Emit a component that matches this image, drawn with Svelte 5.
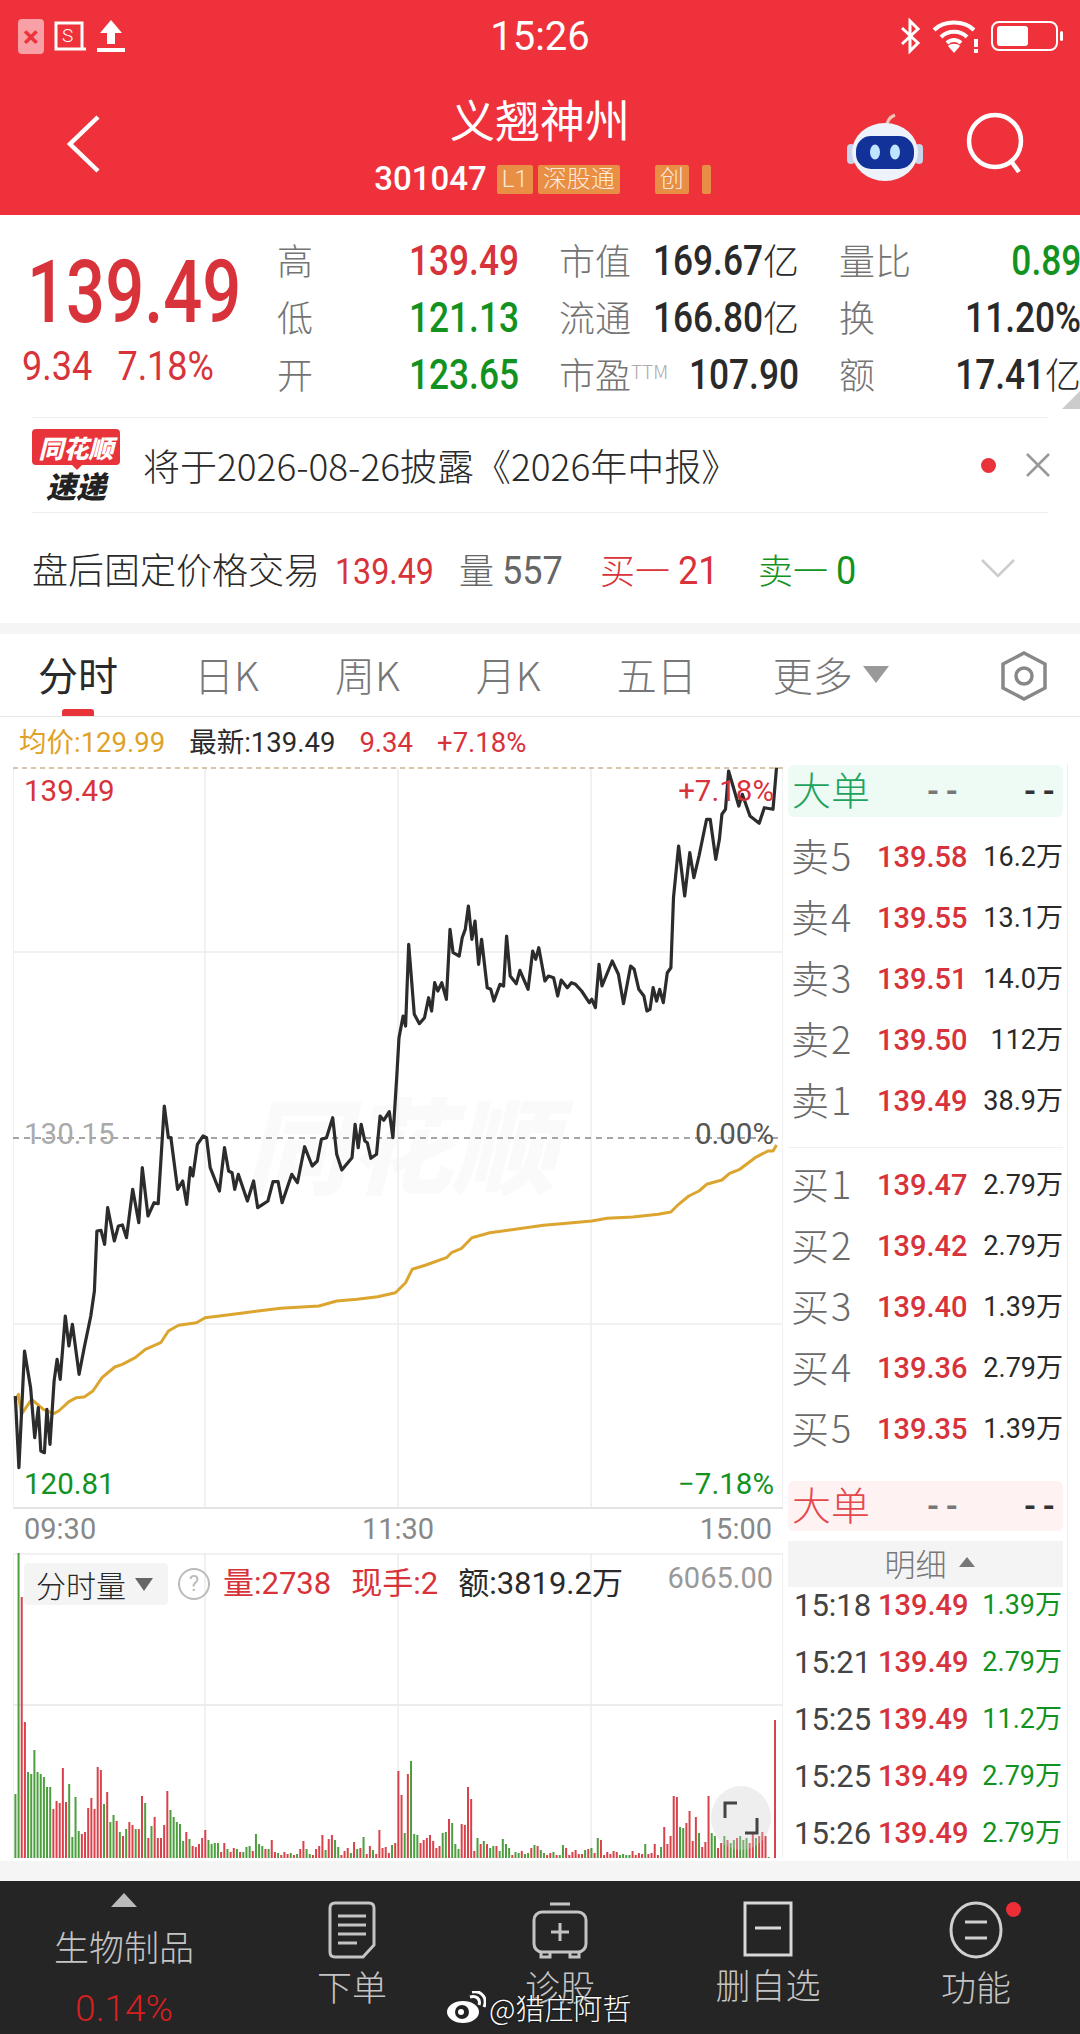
<script>
	// traced from the chart: x / 1.96, y / 3 + crop offset
	const lower = [[30,1065],[37,1280],[48,930],[60,1040],[68,1190],[75,1100],[80,1230],[87,1235],[92,1105],[98,1210],[106,1020],[112,955],[118,1015],[128,825],[135,915],[142,850],[155,1000],[165,920],[178,825],[185,750],[190,570],[198,568],[205,610],[211,500],[224,600],[232,555],[240,552],[248,590],[260,445],[272,545],[279,380],[290,525],[302,485],[310,488],[322,195],[330,290],[335,290],[348,445],[358,420],[366,490],[373,380],[378,405],[387,310],[398,285],[405,290],[412,380],[430,450],[440,320],[448,390],[455,395],[460,445],[467,400],[485,480],[497,420],[505,500],[515,490],[525,480],[535,422],[545,422],[553,485],[572,400],[583,425],[597,317],[612,375],[622,360],[630,295],[640,290],[652,230],[660,340],[670,387],[690,350],[696,250],[702,320],[708,250],[715,300],[720,305],[727,352],[738,340],[745,225],[752,238],[763,212],[770,290],[778,100]];
	const upper = [[782,1250],[790,1185],[795,1215],[801,970],[812,1180],[822,1208],[832,1190],[840,1130],[846,1170],[852,1085],[858,1110],[866,1085],[875,1135],[882,925],[888,995],[900,1005],[906,950],[912,925],[918,855],[925,955],[931,900],[938,1030],[944,955],[955,1100],[962,1105],[968,1140],[980,1090],[987,1095],[993,945],[1000,1065],[1012,1088],[1019,1048],[1035,1105],[1044,990],[1050,1015],[1056,980],[1068,1080],[1075,1065],[1085,1070],[1093,1125],[1100,1077],[1112,1100],[1120,1085],[1128,1090],[1140,1110],[1155,1145],[1160,1135],[1167,1160],[1174,1030],[1180,1095],[1200,1020],[1212,1060],[1222,1148],[1236,1035],[1243,1045],[1252,1105],[1262,1125],[1268,1170],[1274,1165],[1280,1100],[1287,1140],[1293,1105],[1300,1145],[1308,1055],[1315,1040],[1320,830],[1330,675],[1342,825],[1352,695],[1360,770],[1370,705],[1385,595],[1392,595],[1403,715],[1410,655],[1415,580],[1422,565],[1428,450],[1448,555],[1455,520],[1470,585],[1488,607],[1498,560],[1515,565],[1522,440]];
	const avg = [[30,1080],[36,1060],[42,1120],[62,1075],[85,1105],[105,1118],[115,1110],[135,1082],[150,1070],[165,1068],[182,1050],[200,1010],[225,978],[240,970],[265,950],[285,925],[315,905],[330,870],[350,853],[385,845],[402,830],[430,825],[480,815],[550,802],[625,795],[660,780],[700,775],[740,767],[775,755],[795,725],[808,685],[835,672],[875,650],[885,635],[905,622],[925,590],[960,575],[1010,565],[1065,553],[1100,548],[1160,540],[1190,532],[1240,528],[1290,520],[1315,513],[1330,490],[1350,465],[1370,450],[1385,430],[1415,417],[1430,397],[1450,385],[1480,350],[1505,330],[1515,330],[1522,312]];

	const pts = (list, top) => list.map(([x, y]) => `${(x / 1.96).toFixed(1)},${(top + y / 3).toFixed(1)}`).join(' ');
	const pricePoints = pts(lower, 1040) + ' ' + pts(upper, 620);
	const avgPoints = pts(avg, 1040);

	// positive = up (red), negative = down (green)
	const volumes = [-64,-307,261,136,-86,-84,-108,-86,-84,-81,-71,-71,49,57,55,90,56,-74,-21,-61,-27,24,26,50,60,49,91,88,-54,66,-36,-43,37,-26,22,-29,36,33,-29,29,62,-55,20,-32,41,20,20,33,67,-48,-41,-36,-34,-17,26,-19,12,11,14,20,28,-18,-14,-15,-15,6,15,-9,6,10,-9,6,-6,-11,-12,7,-24,-14,-12,9,-9,18,6,-5,3,6,4,-5,3,-4,9,17,-9,-4,3,9,12,23,-8,19,23,-18,-11,3,7,10,-5,16,-9,10,-21,4,12,-8,4,28,10,11,5,-13,15,87,63,-25,84,-97,-24,-23,15,18,20,23,17,10,12,-25,-26,39,-35,-14,-9,34,33,71,59,7,-20,14,-17,14,-10,-12,12,-7,-19,-14,-10,3,-6,-5,7,-4,-5,10,-13,12,-8,-5,3,5,-6,3,-3,-13,10,3,6,8,4,4,-8,9,-10,5,-20,18,3,6,4,7,6,-3,-4,-3,-3,7,3,5,4,-14,4,5,14,3,-11,31,14,22,62,61,-31,-30,35,47,17,41,-25,11,16,62,-25,-22,10,15,-22,18,-15,-18,20,-22,-18,-20,15,25,-20,22,26,22,-1,0,138];

	const gridX = [205, 398, 591];

	const asks = [
		['卖5', '139.58', '16.2'],
		['卖4', '139.55', '13.1'],
		['卖3', '139.51', '14.0'],
		['卖2', '139.50', '112'],
		['卖1', '139.49', '38.9']
	];
	const bids = [
		['买1', '139.47', '2.79'],
		['买2', '139.42', '2.79'],
		['买3', '139.40', '1.39'],
		['买4', '139.36', '2.79'],
		['买5', '139.35', '1.39']
	];
	const ticks = [
		['15:18', '1.39'],
		['15:21', '2.79'],
		['15:25', '11.2'],
		['15:25', '2.79'],
		['15:26', '2.79']
	];
</script>

<div class="page">
	<header class="top">
		<div class="status">
			<div class="status-left">
				<span class="close-app">×</span>
				<svg width="36" height="34" viewBox="0 0 36 34" fill="none" stroke="#fff" stroke-width="3"><path d="M30 30V4H4v26h30" /><text x="10" y="23" font-size="19" fill="#fff" stroke="none" font-family="Roboto">S</text></svg>
				<svg width="30" height="34" viewBox="0 0 30 34" fill="#fff"><path d="M15 1 26 14H19V25H11V14H4Z" /><rect x="1" y="29" width="28" height="4" /></svg>
			</div>
			<span class="clock">15:26</span>
			<div class="status-right">
				<svg width="24" height="36" viewBox="0 0 24 36" fill="none" stroke="#fff" stroke-width="3"><path d="M4 10 20 25 12 33V3L20 11 4 26" /></svg>
				<svg width="48" height="34" viewBox="0 0 48 34"><g fill="none" stroke="#fff" stroke-width="4"><path d="M2 11C12 1 32 1 42 11" /><path d="M9 18C16 11 28 11 35 18" /><path d="M15 24C19 20 25 20 29 24" /></g><path d="M16 27 22 34 28 27C25 24 19 24 16 27Z" fill="#fff" /><rect x="42" y="20" width="4" height="8" fill="#fff" /><rect x="42" y="30" width="4" height="4" fill="#fff" /></svg>
				<svg width="74" height="32" viewBox="0 0 74 32"><rect x="2" y="2" width="65" height="28" rx="7" fill="none" stroke="#fff" stroke-width="2" /><rect x="7" y="6" width="31" height="20" rx="3" fill="#fff" /><rect x="70" y="11" width="3" height="10" rx="1.5" fill="#fff" /></svg>
			</div>
		</div>
		<nav class="nav">
			<svg class="back" width="36" height="60" viewBox="0 0 36 60" fill="none" stroke="#fff" stroke-width="4.5"><path d="M32 3 4 30 32 57" /></svg>
			<div class="title-block">
				<div class="title">义翘神州</div>
				<div class="code-line">
					<span class="code">301047</span>
					<span class="tag">L1</span>
					<span class="tag">深股通</span>
					<span class="tag tag-gap">创</span>
					<span class="tag tag-cut"></span>
				</div>
			</div>
			<div class="nav-right">
				<svg class="robot" width="78" height="70" viewBox="0 0 78 70">
					<path d="M41 14C41 8 44 5 49 3" fill="none" stroke="#f3c4b8" stroke-width="3" />
					<rect x="1" y="32" width="8" height="20" rx="4" fill="#c9d3ea" />
					<rect x="69" y="32" width="8" height="20" rx="4" fill="#c9d3ea" />
					<ellipse cx="39" cy="40" rx="33" ry="29" fill="#eef2fa" />
					<rect x="10" y="24" width="58" height="33" rx="15" fill="#12329a" />
					<ellipse cx="29" cy="40" rx="5" ry="7.5" fill="#bfe4ff" />
					<ellipse cx="49" cy="40" rx="5" ry="7.5" fill="#bfe4ff" />
				</svg>
				<svg width="62" height="62" viewBox="0 0 62 62" fill="none" stroke="#fff" stroke-width="4.5"><circle cx="29" cy="29" r="26" /><path d="M45 49 53 60" /></svg>
			</div>
		</nav>
	</header>

	<section class="quote">
		<div class="quote-left">
			<div class="big-price">139.49</div>
			<div class="change"><span>9.34</span><span class="change-pct">7.18%</span></div>
		</div>
		<div class="stats">
			<div class="stat"><span class="lbl">高</span><span class="val red"><span class="sq">139.49</span></span></div>
			<div class="stat"><span class="lbl">市值</span><span class="val"><span class="sq">169.67</span><i>亿</i></span></div>
			<div class="stat"><span class="lbl">量比</span><span class="val green"><span class="sq">0.89</span></span></div>
			<div class="stat"><span class="lbl">低</span><span class="val green"><span class="sq">121.13</span></span></div>
			<div class="stat"><span class="lbl">流通</span><span class="val"><span class="sq">166.80</span><i>亿</i></span></div>
			<div class="stat"><span class="lbl">换</span><span class="val"><span class="sq">11.20%</span></span></div>
			<div class="stat"><span class="lbl">开</span><span class="val green"><span class="sq">123.65</span></span></div>
			<div class="stat"><span class="lbl">市盈<sup>TTM</sup></span><span class="val"><span class="sq">107.90</span></span></div>
			<div class="stat"><span class="lbl">额</span><span class="val"><span class="sq">17.41</span><i>亿</i></span></div>
		</div>
		<span class="corner"></span>
	</section>

	<section class="notice">
		<div class="notice-row">
			<div class="logo">
				<div class="logo-top">同花顺</div>
				<div class="logo-bottom">速递</div>
			</div>
			<span class="notice-text">将于2026-08-26披露《2026年中报》</span>
			<span class="dot"></span>
			<svg class="close" width="26" height="26" viewBox="0 0 26 26" fill="none" stroke="#999" stroke-width="2.5"><path d="M2 2 24 24M24 2 2 24" /></svg>
		</div>
		<div class="after-row">
			<span class="after-title">盘后固定价格交易</span>
			<span class="num red"><span class="sq-l">139.49</span></span>
			<span class="after-vol">量 <span class="sq-m">557</span></span>
			<span class="red after-buy">买一 <span class="sq-m">21</span></span>
			<span class="green after-sell">卖一 <span class="sq-m">0</span></span>
			<svg class="chev" width="36" height="20" viewBox="0 0 36 20" fill="none" stroke="#ccc" stroke-width="2.5"><path d="M2 2 18 18 34 2" /></svg>
		</div>
	</section>

	<div class="band"></div>

	<div class="tabs">
		<span class="tab active">分时</span>
		<span class="tab">日K</span>
		<span class="tab">周K</span>
		<span class="tab">月K</span>
		<span class="tab">五日</span>
		<span class="tab">更多<i class="tri"></i></span>
		<svg class="hex" width="48" height="52" viewBox="0 0 48 52" fill="none" stroke="#888" stroke-width="3.5"><path d="M24 3 45 14V38L24 49 3 38V14Z" /><circle cx="24" cy="26" r="8" /></svg>
	</div>

	<div class="info">
		<span class="gold">均价:129.99</span>
		<span>最新:139.49</span>
		<span class="red">9.34</span>
		<span class="red">+7.18%</span>
	</div>

	<div class="body">
		<div class="chart-col">
			<div class="chart">
				<svg width="770" height="745" viewBox="13 763 770 745">
					<text x="400" y="1185" class="mark">同花顺</text>
					{#each gridX as x}
						<line x1={x} x2={x} y1="767" y2="1508" stroke="#ececec" stroke-width="1.5" />
					{/each}
					<line x1="13" x2="13" y1="767" y2="1508" stroke="#ececec" stroke-width="1.5" />
					<line x1="783" x2="783" y1="767" y2="1508" stroke="#ececec" stroke-width="1.5" />
					<line x1="13" x2="783" y1="951" y2="951" stroke="#ececec" stroke-width="1.5" />
					<line x1="13" x2="783" y1="1323" y2="1323" stroke="#ececec" stroke-width="1.5" />
					<line x1="13" x2="783" y1="1507" y2="1507" stroke="#e4e4e4" stroke-width="2" />
					<line x1="13" x2="783" y1="767" y2="767" stroke="#c9b48c" stroke-width="1.5" stroke-dasharray="5 4" />
					<line x1="13" x2="783" y1="1137" y2="1137" stroke="#888" stroke-width="1.5" stroke-dasharray="6 5" />
					<polyline points={avgPoints} fill="none" stroke="#dba52f" stroke-width="3" stroke-linejoin="round" />
					<polyline points={pricePoints} fill="none" stroke="#2c2c2c" stroke-width="3.2" stroke-linejoin="round" />
				</svg>
				<span class="axis tl red">139.49</span>
				<span class="axis tr red">+7.18%</span>
				<span class="axis ml grey">130.15</span>
				<span class="axis mr dim">0.00%</span>
				<span class="axis bl green">120.81</span>
				<span class="axis br green">−7.18%</span>
			</div>
			<div class="times"><span>09:30</span><span>11:30</span><span>15:00</span></div>
			<div class="vol">
				<svg width="770" height="306" viewBox="13 1552 770 306">
					<line x1="13" x2="783" y1="1553" y2="1553" stroke="#ececec" stroke-width="1.5" />
					<line x1="13" x2="783" y1="1704" y2="1704" stroke="#e6e6e6" stroke-width="1.5" />
					{#each gridX as x}
						<line x1={x} x2={x} y1="1552" y2="1857" stroke="#ececec" stroke-width="1.5" />
					{/each}
					<line x1="13" x2="13" y1="1552" y2="1857" stroke="#ececec" stroke-width="1.5" />
					<line x1="783" x2="783" y1="1552" y2="1857" stroke="#ececec" stroke-width="1.5" />
					{#each volumes as v, i}
						<rect x={14.4 + i * 3.165} y={1857 - Math.abs(v)} width="2" height={Math.abs(v)} fill={v > 0 ? '#d9424a' : '#4c9f3e'} />
					{/each}
				</svg>
				<div class="vol-head">
					<span class="chip">分时量<i class="tri dark"></i></span>
					<span class="help">?</span>
					<span class="red">量:2738</span>
					<span class="red">现手:2</span>
					<span>额:3819.2万</span>
				</div>
				<span class="vol-max">6065.00</span>
				<div class="full">
					<svg width="40" height="40" viewBox="0 0 40 40" fill="none" stroke="#444" stroke-width="3"><path d="M16 5H4V20" /><path d="M36 20V35H24" /></svg>
				</div>
			</div>
		</div>

		<aside class="book">
			<div class="big green-band"><span>大单</span><b class="dash mid">--</b><b class="dash">--</b></div>
			<div class="levels">
				{#each asks as [label, price, size]}
					<div class="level"><span class="lv">{label}</span><span class="px">{price}</span><span class="sz">{size}万</span></div>
				{/each}
			</div>
			<div class="split"></div>
			<div class="levels">
				{#each bids as [label, price, size]}
					<div class="level"><span class="lv">{label}</span><span class="px">{price}</span><span class="sz">{size}万</span></div>
				{/each}
			</div>
			<div class="big red-band"><span>大单</span><b class="dash mid">--</b><b class="dash">--</b></div>
			<div class="detail">明细<i class="tri up"></i></div>
			<div class="ticks">
				{#each ticks as [time, size]}
					<div class="tick"><span class="tm">{time}</span><span class="px">139.49</span><span class="sz green">{size}万</span></div>
				{/each}
			</div>
		</aside>
	</div>

	<div class="spacer"></div>

	<footer class="bar">
		<div class="item sector">
			<i class="tri up light"></i>
			<span class="sector-name">生物制品</span>
			<span class="sector-pct">0.14%</span>
		</div>
		<div class="item">
			<svg width="50" height="58" viewBox="0 0 50 58" fill="none" stroke="#c4c4c4" stroke-width="3"><path d="M8 2H42Q47 2 47 7V44L36 56H8Q3 56 3 51V7Q3 2 8 2Z" /><path d="M11 15H39M11 24H39M11 33H39M11 42H30" /></svg>
			<span>下单</span>
		</div>
		<div class="item">
			<svg width="58" height="58" viewBox="0 0 58 58" fill="none" stroke="#c4c4c4" stroke-width="3"><path d="M19 3H39" /><rect x="3" y="11" width="52" height="40" rx="8" /><path d="M29 22V40M20 31H38" /><path d="M10 51V56H19V51M39 51V56H48V51" /></svg>
			<span>诊股</span>
		</div>
		<div class="item">
			<svg width="50" height="56" viewBox="0 0 50 56" fill="none" stroke="#d8d8d8" stroke-width="3"><rect x="2" y="2" width="46" height="52" /><path d="M12 27H38" /></svg>
			<span>删自选</span>
		</div>
		<div class="item">
			<svg width="54" height="58" viewBox="0 0 54 58" fill="none" stroke="#d0d0d0" stroke-width="3"><ellipse cx="27" cy="29" rx="25" ry="27" /><path d="M16 21H38M16 37H38" /></svg>
			<span>功能</span>
			<span class="badge"></span>
		</div>
		<div class="watermark">
			<svg width="40" height="32" viewBox="0 0 40 32"><ellipse cx="17" cy="21" rx="16" ry="11" fill="#fff" /><circle cx="16" cy="21" r="7" fill="#222" /><circle cx="15" cy="21" r="3" fill="#fff" /><path d="M24 6C30 4 35 8 33 14M26 1C35 -1 42 7 38 16" fill="none" stroke="#fff" stroke-width="3" /></svg>
			<span>@猎庄阿哲</span>
		</div>
	</footer>
</div>

<style>
	:global(body) {
		margin: 0;
		background: #fff;
	}

	.page {
		width: 1080px;
		height: 2034px;
		overflow: hidden;
		display: flex;
		flex-direction: column;
		font-family: "Noto Sans CJK SC", sans-serif;
		font-weight: 300;
		color: #2a2a2a;
	}

	i {
		font-style: normal;
	}

	.red {
		color: #d8323a;
	}

	.green {
		color: #129220;
	}

	.gold {
		color: #dfa126;
	}

	/* the app's number font is narrower than Roboto */
	.sq,
	.sq-l,
	.sq-m {
		display: inline-block;
		font-family: "Roboto", sans-serif;
		font-weight: 500;
		transform: scaleX(0.84);
		transform-origin: 100% 50%;
	}

	.sq-l,
	.sq-m {
		font-weight: 400;
		font-size: 37px;
		transform: scaleX(0.87);
		transform-origin: 0 50%;
	}

	.sq-m {
		font-size: 38px;
		transform: scaleX(0.95);
	}

	/* Header */
	.top {
		height: 215px;
		flex: none;
		background: #ee313a;
		color: #fff;
	}

	.status {
		height: 72px;
		display: flex;
		align-items: center;
		justify-content: space-between;
		position: relative;
		padding: 0 16px 0 18px;
	}

	.status-left,
	.status-right {
		display: flex;
		align-items: center;
		gap: 8px;
	}

	.status-right {
		gap: 10px;
	}

	.close-app {
		width: 26px;
		height: 35px;
		border-radius: 4px;
		background: #f9a0a6;
		color: #ee313a;
		font: 700 30px/35px "Roboto", sans-serif;
		text-align: center;
	}

	.clock {
		position: absolute;
		left: 0;
		right: 0;
		top: 1px;
		text-align: center;
		font: 400 40px/72px "Roboto", sans-serif;
	}

	.nav {
		height: 143px;
		display: grid;
		grid-template-columns: 1fr auto 1fr;
		align-items: start;
	}

	.back {
		margin: 42px 0 0 66px;
	}

	.title-block {
		display: flex;
		flex-direction: column;
		align-items: center;
		padding-top: 17px;
	}

	.title {
		font-size: 45px;
		line-height: 60px;
		font-weight: 400;
	}

	.code-line {
		display: flex;
		align-items: center;
		gap: 5px;
		margin-top: 14px;
		height: 32px;
		margin-left: 5px;
	}

	.code {
		font: 500 33px/32px "Roboto", sans-serif;
		margin-right: 5px;
	}

	.tag {
		height: 29px;
		line-height: 28px;
		padding: 0 5px;
		background: #e88e45;
		color: #fde9d8;
		font-size: 24px;
		font-family: "Roboto", "Noto Sans CJK SC", sans-serif;
		border-radius: 2px;
	}

	.tag-gap {
		margin-left: 30px;
	}

	.tag-cut {
		width: 1px;
		padding: 0 4px;
		margin-left: 8px;
	}

	.nav-right {
		display: flex;
		justify-content: flex-end;
		align-items: flex-start;
		gap: 42px;
		padding: 40px 52px 0 0;
	}

	/* Quote */
	.quote {
		position: relative;
		height: 202px;
		flex: none;
		display: flex;
		overflow: hidden;
	}

	.quote-left {
		width: 277px;
		flex: none;
		padding: 40px 0 0 27px;
		box-sizing: border-box;
		color: #d8323a;
	}

	.big-price {
		font: 500 87px/74px "Roboto", sans-serif;
		transform: scaleX(0.79);
		transform-origin: 0 50%;
		white-space: nowrap;
	}

	.change {
		display: flex;
		margin: 16px 0 0 -5px;
		font: 400 40px/44px "Roboto", sans-serif;
		transform: scaleX(0.9);
		transform-origin: 0 50%;
	}

	.change-pct {
		margin-left: 28px;
	}

	.stats {
		flex: 1;
		display: grid;
		grid-template-columns: 242px 240px 242px;
		grid-auto-rows: 57px;
		column-gap: 40px;
		padding-top: 15px;
	}

	.stat {
		display: flex;
		align-items: center;
		justify-content: space-between;
		white-space: nowrap;
	}

	.lbl {
		font-size: 36px;
		color: #747474;
	}

	sup {
		font-size: 19px;
		vertical-align: 10px;
		line-height: 0;
		color: #aaa;
	}

	.val {
		font-size: 42px;
		line-height: 50px;
	}

	.val i {
		font-size: 36px;
	}

	.corner {
		position: absolute;
		right: 0;
		bottom: 8px;
		border-left: 18px solid transparent;
		border-bottom: 18px solid #ccc;
	}

	/* Notices */
	.notice {
		flex: none;
		margin: 0 32px;
		border-top: 1px solid #eee;
	}

	.notice-row {
		height: 94px;
		display: flex;
		align-items: center;
		border-bottom: 1px solid #eee;
	}

	.logo {
		width: 88px;
		flex: none;
		text-align: center;
		font-style: italic;
		font-weight: 900;
	}

	.logo-top {
		background: #e8333a;
		color: #fff;
		border-radius: 4px;
		font-size: 25px;
		line-height: 36px;
		margin-bottom: 3px;
		position: relative;
	}

	.logo-top::after {
		content: "";
		position: absolute;
		left: 40px;
		top: 36px;
		border: 5px solid transparent;
		border-top-color: #e8333a;
	}

	.logo-bottom {
		font-size: 30px;
		line-height: 34px;
		color: #222;
	}

	.notice-text {
		flex: 1;
		margin-left: 23px;
		font-size: 37px;
		white-space: nowrap;
	}

	.dot {
		width: 15px;
		height: 15px;
		border-radius: 50%;
		background: #e8333a;
		margin-right: 29px;
	}

	.close {
		margin-right: -3px;
	}

	.after-row {
		height: 110px;
		display: flex;
		align-items: center;
		font-size: 35px;
		white-space: nowrap;
	}

	.after-title {
		width: 303px;
		flex: none;
		font-size: 36px;
	}

	.num {
		width: 124px;
	}

	.after-vol {
		width: 141px;
		color: #666;
	}

	.after-buy {
		width: 158px;
	}

	.after-sell {
		flex: 1;
	}

	.chev {
		margin-right: 32px;
	}

	.band {
		height: 11px;
		flex: none;
		background: #f5f5f5;
	}

	/* Tabs */
	.tabs {
		height: 83px;
		flex: none;
		display: flex;
		align-items: center;
		gap: 76px;
		padding-left: 38px;
		border-bottom: 1px solid #e8e8e8;
		box-sizing: border-box;
		position: relative;
		font-size: 40px;
		color: #777;
	}

	.tab {
		white-space: nowrap;
		display: flex;
		align-items: center;
		padding-bottom: 2px;
	}

	.active {
		color: #2a2a2a;
		font-weight: 400;
	}

	.active::after {
		content: "";
		position: absolute;
		left: 62px;
		bottom: 0;
		width: 32px;
		height: 7px;
		border-radius: 3px 3px 0 0;
		background: #e8333a;
	}

	.tri {
		width: 0;
		height: 0;
		margin-left: 10px;
		border: 13px solid transparent;
		border-bottom-width: 0;
		border-top: 17px solid #999;
	}

	.hex {
		position: absolute;
		left: 1000px;
		top: 16px;
	}

	.info {
		height: 47px;
		flex: none;
		box-sizing: border-box;
		padding: 5px 0 0 19px;
		display: flex;
		align-items: center;
		gap: 24px;
		font: 400 27.5px/42px "Roboto", "Noto Sans CJK SC", sans-serif;
		color: #2a2a2a;
		white-space: nowrap;
	}

	/* Charts */
	.body {
		display: flex;
		height: 1097px;
		flex: none;
		padding-left: 13px;
	}

	.chart-col {
		width: 770px;
		flex: none;
	}

	.chart {
		position: relative;
		height: 745px;
	}

	.chart svg,
	.vol svg {
		display: block;
	}

	.mark {
		font: italic 900 104px "Noto Sans CJK SC", sans-serif;
		fill: #fafafa;
		text-anchor: middle;
	}

	.axis {
		position: absolute;
		font: 400 29.5px/34px "Roboto", sans-serif;
	}

	.tl,
	.tr {
		top: 10px;
	}

	.ml,
	.mr {
		top: 353px;
	}

	.bl,
	.br {
		top: 703px;
	}

	.tl,
	.ml,
	.bl {
		left: 11px;
	}

	.tr,
	.mr,
	.br {
		right: 9px;
	}

	.grey {
		color: #aaa;
	}

	.dim {
		color: #555;
	}

	.times {
		height: 44px;
		display: flex;
		justify-content: space-between;
		padding: 0 11px;
		font: 400 29px/40px "Roboto", sans-serif;
		color: #888;
	}

	.vol {
		position: relative;
		height: 306px;
	}

	.vol-head {
		position: absolute;
		left: 11px;
		top: 10px;
		display: flex;
		align-items: center;
		gap: 20px;
		font: 400 31px/42px "Roboto", "Noto Sans CJK SC", sans-serif;
		white-space: nowrap;
	}

	.chip {
		width: 144px;
		height: 42px;
		display: flex;
		align-items: center;
		box-sizing: border-box;
		padding-left: 12px;
		background: #f4f4f4;
		border-radius: 4px;
		font-family: "Noto Sans CJK SC", sans-serif;
		font-weight: 300;
		font-size: 30px;
	}

	.tri.dark {
		margin-left: 9px;
		border-width: 13px 9px 0;
		border-top-color: #666;
		border-left-color: transparent;
		border-right-color: transparent;
	}

	.help {
		width: 28px;
		height: 28px;
		margin: 0 -7px 0 -10px;
		border: 2px solid #bbb;
		border-radius: 50%;
		color: #bbb;
		font-size: 22px;
		line-height: 28px;
		text-align: center;
	}

	.vol-max {
		position: absolute;
		right: 10px;
		top: 7px;
		font: 400 29px/36px "Roboto", sans-serif;
		color: #999;
	}

	.full {
		position: absolute;
		left: 698px;
		top: 233px;
		width: 60px;
		height: 64px;
		display: flex;
		align-items: center;
		justify-content: center;
		border-radius: 50%;
		background: rgba(205, 205, 205, 0.35);
	}

	/* Order book */
	.book {
		width: 285px;
		flex: none;
		box-sizing: border-box;
		height: 1095px;
		padding: 1px 4px 0 5px;
		border-right: 1px solid #eee;
	}

	.big {
		height: 52px;
		display: flex;
		align-items: center;
		padding: 0 2px 0 4px;
		border-radius: 6px;
		font-size: 39px;
	}

	.green-band {
		background: #eefaf4;
		color: #1ea35f;
	}

	.red-band {
		height: 50px;
		margin-top: 21px;
		background: #fef2f2;
		color: #e5484d;
	}

	.big span {
		flex: 1;
		padding-bottom: 6px;
	}

	.dash {
		width: 42px;
		color: #333;
		font: 700 32px/1 "Roboto", sans-serif;
		letter-spacing: 6px;
		text-align: right;
	}

	.dash.mid {
		margin-right: 55px;
		color: #777;
	}

	.levels {
		margin-top: 10px;
	}

	.level {
		height: 61px;
		display: grid;
		grid-template-columns: 86px 1fr auto;
		align-items: center;
		padding: 0 0 0 3px;
	}

	.lv {
		font-size: 38px;
		letter-spacing: 2px;
		line-height: 50px;
		padding-bottom: 6px;
		color: #6a6a6a;
	}

	.px {
		font: 500 29px/1 "Roboto", sans-serif;
		color: #d8323a;
	}

	.sz {
		font: 400 27px/1 "Roboto", "Noto Sans CJK SC", sans-serif;
	}

	.split {
		margin-top: 15px;
		border-top: 1px solid #f0f0f0;
		margin-bottom: -3px;
	}

	.detail {
		height: 46px;
		margin-top: 10px;
		display: flex;
		align-items: center;
		justify-content: center;
		background: #f4f4f4;
		color: #777;
		font-size: 31px;
		padding: 0 0 4px 8px;
		box-sizing: border-box;
	}

	.tri.up {
		margin-left: 12px;
		border-width: 0 8px 10px;
		border-top: 0;
		border-bottom: 10px solid #777;
		border-left-color: transparent;
		border-right-color: transparent;
	}

	.ticks {
		display: flex;
		flex-direction: column;
		gap: 17px;
		margin-top: -2px;
	}

	.tick {
		height: 40px;
		display: grid;
		grid-template-columns: 84px 1fr auto;
		align-items: center;
		padding: 0 1px 0 6px;
	}

	.tm {
		font: 400 31px/1 "Roboto", sans-serif;
		color: #444;
	}

	.spacer {
		flex: 1;
		background: #f5f5f5;
	}

	/* Bottom bar */
	.bar {
		height: 153px;
		flex: none;
		position: relative;
		display: grid;
		grid-template-columns: 248px repeat(4, 208px);
		background: #252525;
		color: #c4c4c4;
	}

	.item {
		position: relative;
		display: flex;
		flex-direction: column;
		align-items: center;
		padding-top: 20px;
		font-size: 35px;
		line-height: 50px;
	}

	.item span {
		margin-top: 2px;
	}

	.sector {
		padding-top: 12px;
	}

	.tri.light {
		margin-left: 0;
		border-width: 0 13px 14px;
		border-bottom-color: #bbb;
	}

	.item .sector-name {
		margin-top: 14px;
		line-height: 50px;
	}

	.item .sector-pct {
		margin-top: 13px;
		font: 300 37px/50px "Roboto", sans-serif;
		color: #d81f1f;
	}

	.item .badge {
		position: absolute;
		margin: 0;
		left: 134px;
		top: 21px;
		width: 15px;
		height: 15px;
		border-radius: 50%;
		background: #ee2e36;
	}

	.watermark {
		position: absolute;
		left: 446px;
		top: 101px;
		display: flex;
		align-items: center;
		gap: 3px;
		color: #fff;
		font-size: 29px;
		line-height: 50px;
		text-shadow: 0 0 2px #000;
	}
</style>
